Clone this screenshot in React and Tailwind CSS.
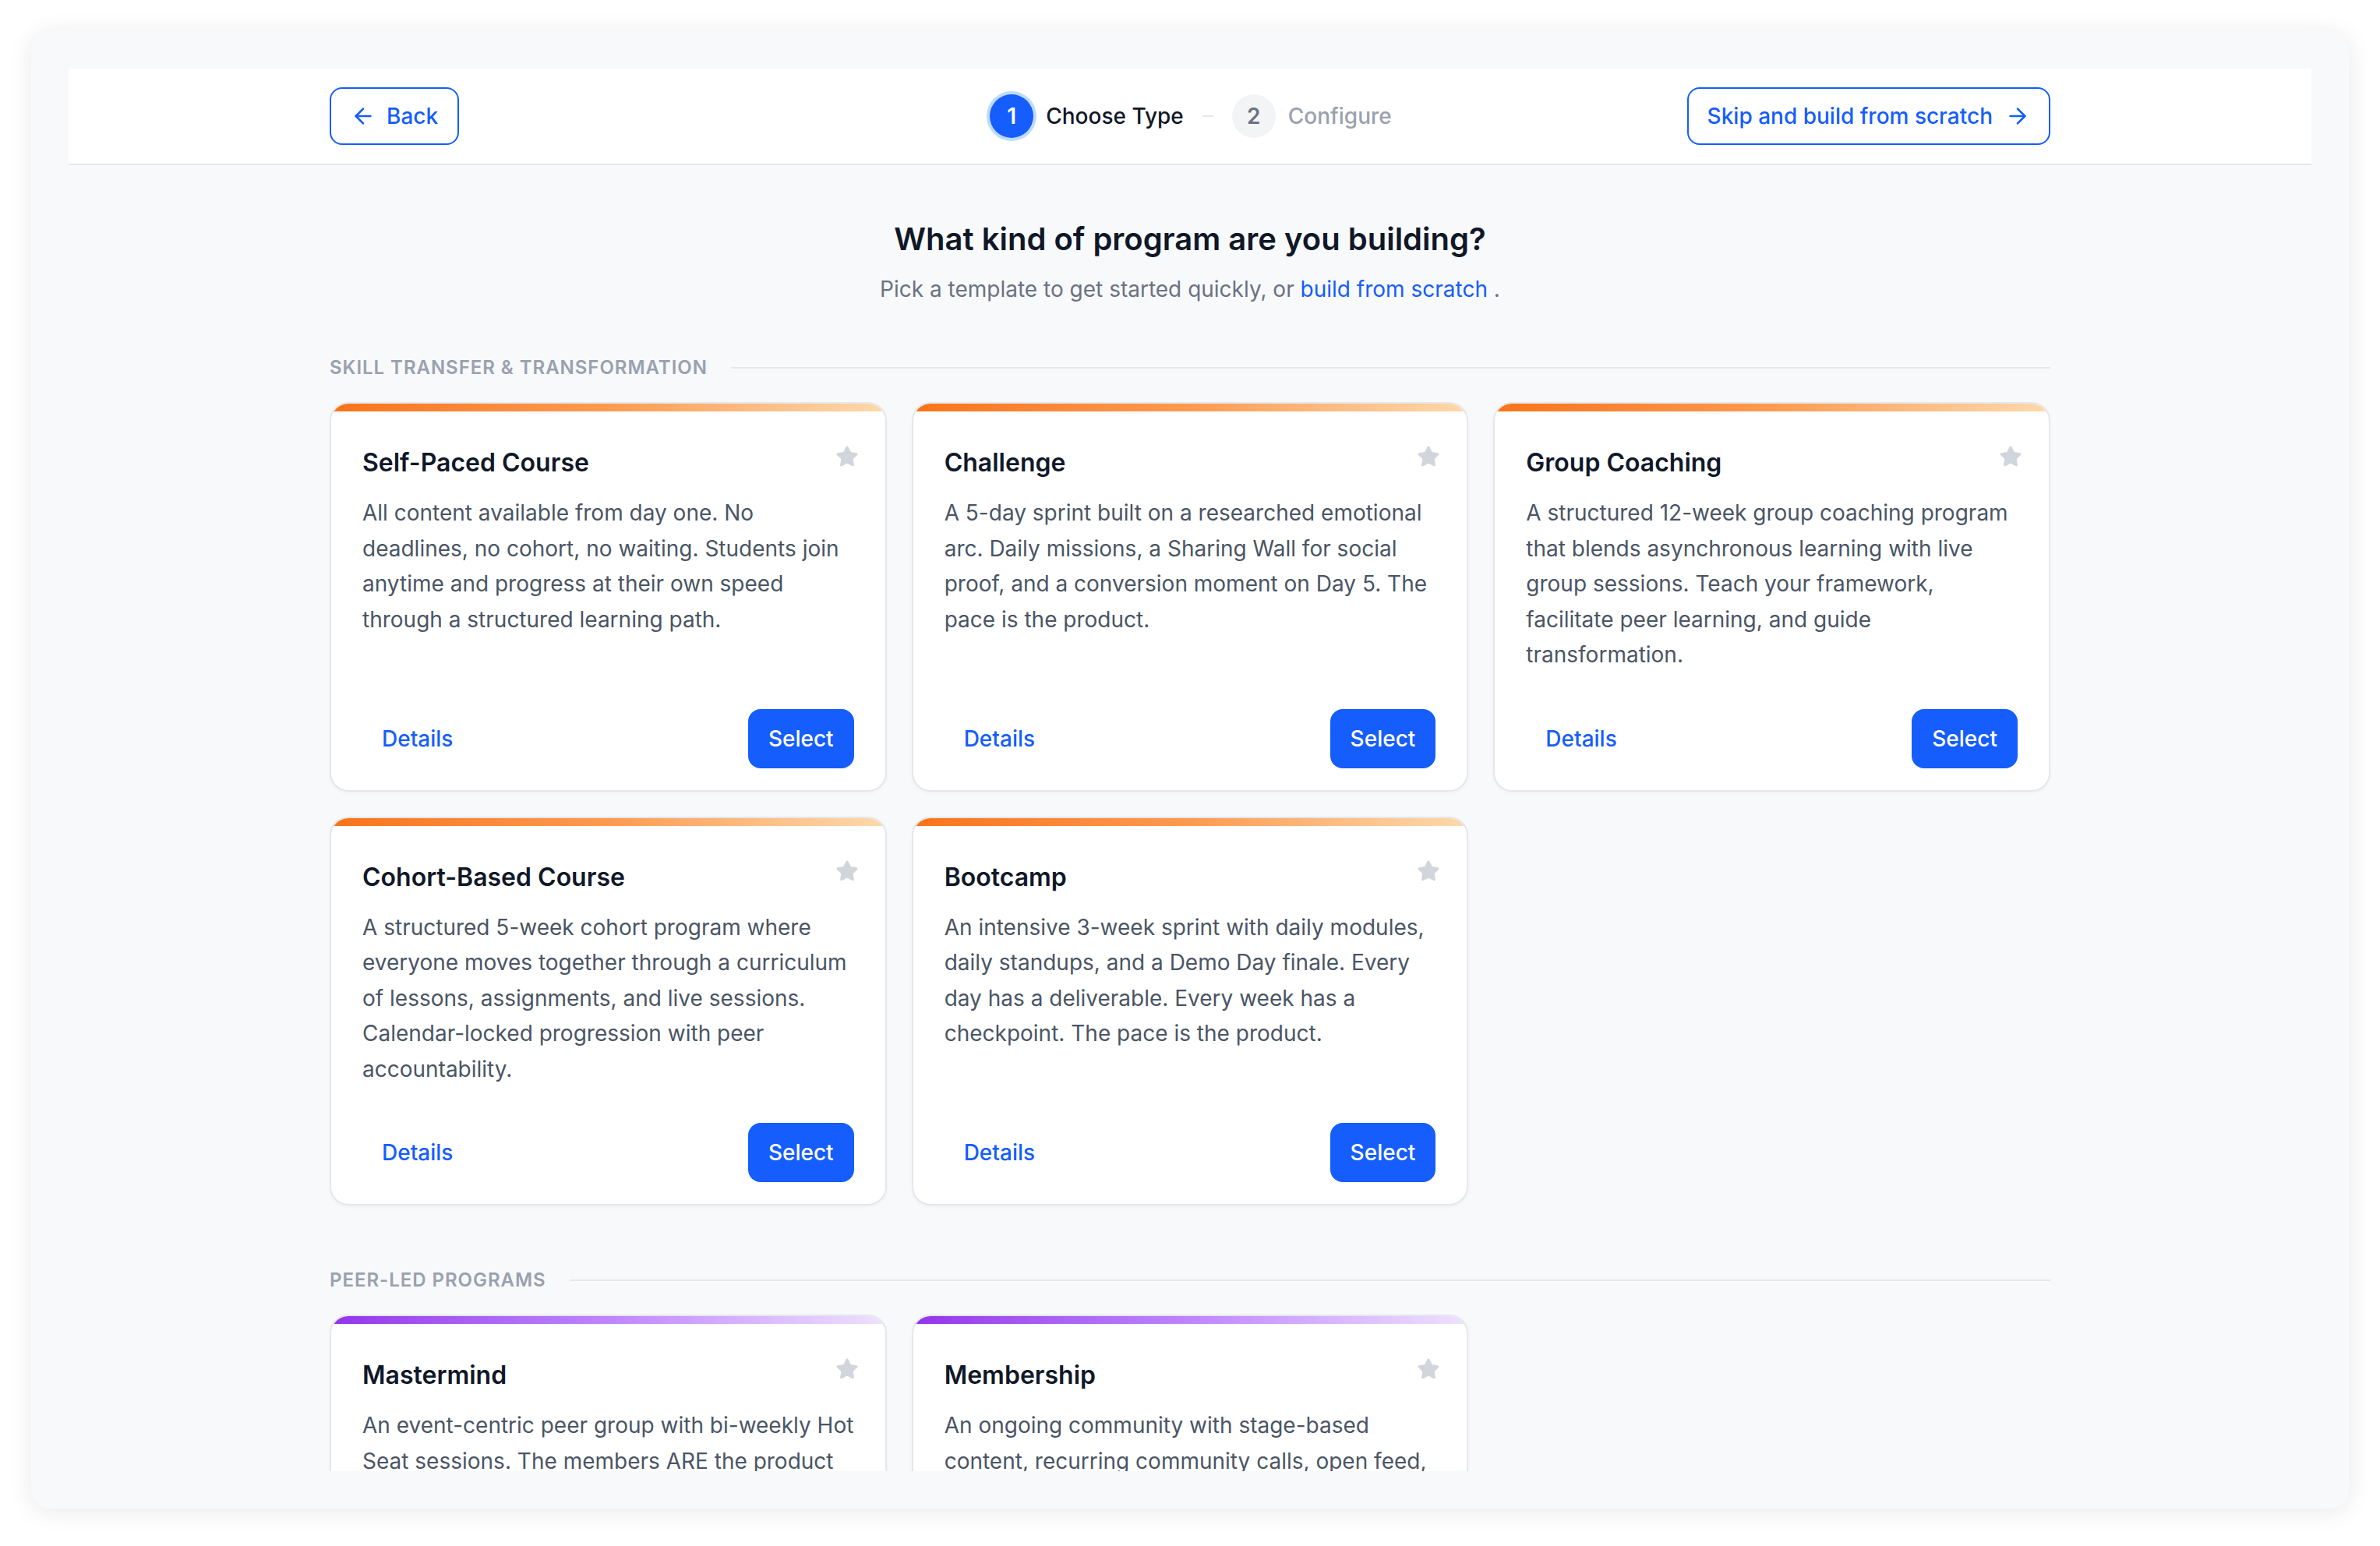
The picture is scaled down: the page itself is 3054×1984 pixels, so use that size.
import React from "react";
import { ArrowLeft, ArrowRight, Star } from "lucide-react";

const skill = [
  {
    title: "Self-Paced Course",
    desc: "All content available from day one. No deadlines, no cohort, no waiting. Students join anytime and progress at their own speed through a structured learning path.",
  },
  {
    title: "Challenge",
    desc: "A 5-day sprint built on a researched emotional arc. Daily missions, a Sharing Wall for social proof, and a conversion moment on Day 5. The pace is the product.",
  },
  {
    title: "Group Coaching",
    desc: "A structured 12-week group coaching program that blends asynchronous learning with live group sessions. Teach your framework, facilitate peer learning, and guide transformation.",
  },
  {
    title: "Cohort-Based Course",
    desc: "A structured 5-week cohort program where everyone moves together through a curriculum of lessons, assignments, and live sessions. Calendar-locked progression with peer accountability.",
  },
  {
    title: "Bootcamp",
    desc: "An intensive 3-week sprint with daily modules, daily standups, and a Demo Day finale. Every day has a deliverable. Every week has a checkpoint. The pace is the product.",
  },
];

const peer = [
  {
    title: "Mastermind",
    desc: "An event-centric peer group with bi-weekly Hot Seat sessions. The members ARE the product — accountability, shared wisdom and facilitated growth.",
  },
  {
    title: "Membership",
    desc: "An ongoing community with stage-based content, recurring community calls, open feed, and member-led discussions that keep people engaged.",
  },
];

function Card({ title, desc, purple }) {
  return (
    <div className="flex flex-col bg-white border-2 border-gray-200 rounded-[24px] overflow-hidden shadow-[0_2px_4px_rgba(0,0,0,0.03)]">
      <div
        className={
          purple
            ? "h-[10px] bg-linear-to-r from-[#9333ea] via-[#c084fc] to-[#efe1ff]"
            : "h-[10px] bg-linear-to-r from-[#f97316] via-[#fb9a4f] to-[#fed9ab]"
        }
      />
      <div className="px-[40px] pt-[42px]">
        <div className="flex items-start justify-between">
          <h3 className="text-[32px] leading-[48px] font-semibold text-gray-900">{title}</h3>
          <Star size={30} strokeWidth={1.5} className="text-gray-300 -mr-[6px] mt-[1px]" fill="currentColor" />
        </div>
        <p className="mt-[18px] text-[28px] leading-[45.5px] text-gray-600">{desc}</p>
      </div>
      <div className="mt-auto flex items-center justify-between px-[40px] pt-[46px] pb-[28px]">
        <button className="h-[76px] px-[25px] rounded-[16px] text-blue-600 font-medium text-[28px]">Details</button>
        <button className="h-[76px] px-[26px] rounded-[16px] bg-blue-600 text-white font-medium text-[28px]">Select</button>
      </div>
    </div>
  );
}

function SectionLabel({ children, className }) {
  return (
    <div className={"flex items-center gap-[30px] " + className}>
      <span className="text-[24px] leading-[32px] font-semibold tracking-[0.04em] uppercase text-gray-400">{children}</span>
      <div className="flex-1 h-[2px] bg-gray-200" />
    </div>
  );
}

export default function App() {
  return (
    <div className="min-h-screen bg-white p-[40px] font-['Inter','Noto_Sans',sans-serif]">
      <div className="h-[1896px] rounded-[24px] bg-[#f8f9fb] shadow-[0_4px_32px_rgba(0,0,0,0.09)] p-[48px]">
        <div className="h-full flex flex-col overflow-hidden">
          <header className="h-[124px] shrink-0 bg-white border-b-2 border-gray-200 flex items-center">
            <div className="mx-auto w-full max-w-[2304px] px-[48px] grid grid-cols-3 items-center">
              <button className="justify-self-start h-[74px] px-[25px] rounded-[16px] border-2 border-blue-600 text-blue-600 text-[28px] font-medium flex items-center gap-[14px]">
                <ArrowLeft size={32} strokeWidth={2} />
                Back
              </button>
              <div className="justify-self-center flex items-center gap-[24px] translate-x-[1px]">
                <div className="flex items-center gap-[16px]">
                  <div className="w-[56px] h-[56px] rounded-full bg-blue-600 text-white ring-[4px] ring-blue-200 flex items-center justify-center text-[28px] font-semibold">1</div>
                  <span className="text-[28px] font-medium text-gray-900">Choose Type</span>
                </div>
                <div className="w-[14px] h-[2px] bg-gray-200" />
                <div className="flex items-center gap-[16px]">
                  <div className="w-[56px] h-[56px] rounded-full bg-gray-100 text-gray-500 flex items-center justify-center text-[28px] font-semibold">2</div>
                  <span className="text-[28px] font-medium text-gray-400">Configure</span>
                </div>
              </div>
              <button className="justify-self-end h-[74px] px-[24px] rounded-[16px] border-2 border-blue-600 text-blue-600 text-[28px] font-medium flex items-center gap-[16px]">
                Skip and build from scratch
                <ArrowRight size={32} strokeWidth={2} />
              </button>
            </div>
          </header>
          <main className="flex-1 overflow-hidden">
            <div className="mx-auto w-full max-w-[2304px] px-[48px] pt-[67px]">
              <h1 className="text-center text-[40px] leading-[56px] font-semibold text-gray-900">What kind of program are you building?</h1>
              <p className="mt-[16px] text-center text-[28px] leading-[40px] text-gray-500">
                Pick a template to get started quickly, or <span className="text-blue-600">build from scratch</span> .
              </p>
              <SectionLabel className="mt-[65px]">Skill Transfer &amp; Transformation</SectionLabel>
              <div className="mt-[28px] grid grid-cols-3 gap-[32px]">
                {skill.map((c) => (
                  <Card key={c.title} {...c} />
                ))}
              </div>
              <SectionLabel className="mt-[80px]">Peer-Led Programs</SectionLabel>
              <div className="mt-[28px] grid grid-cols-3 gap-[32px]">
                {peer.map((c) => (
                  <Card key={c.title} {...c} purple />
                ))}
              </div>
            </div>
          </main>
        </div>
      </div>
    </div>
  );
}
